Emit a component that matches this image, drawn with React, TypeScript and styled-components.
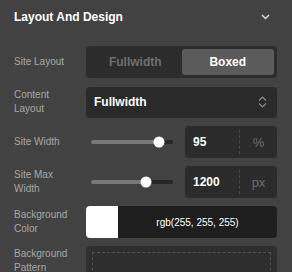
import styled, { createGlobalStyle } from "styled-components";

// 전역 스타일
const GlobalStyle = createGlobalStyle`
  body {
    margin: 0;
    background-color: #424242;
    font-family: "Liberation Sans", Arial, sans-serif;
  }
`;

const Panel = styled.div`
  width: 292px;
  height: 272px;
  overflow: hidden;
  background-color: #424242;
`;

const Header = styled.div`
  display: flex;
  align-items: center;
  justify-content: space-between;
  height: 34px;
  padding: 0 22px 0 14px;
`;

const Title = styled.h2`
  margin: 0;
  font-size: 12px;
  font-weight: bold;
  color: #ffffff;
`;

const Rows = styled.div`
  display: flex;
  flex-direction: column;
  gap: 8px;
  padding: 12px 15px 0 14px;
`;

const Row = styled.div<{ $top?: boolean }>`
  display: flex;
  align-items: ${(p) => (p.$top ? "flex-start" : "center")};
  min-height: 32px;
`;

const Label = styled.div<{ $top?: boolean }>`
  flex: 0 0 72px;
  box-sizing: border-box;
  padding-right: 12px;
  padding-top: ${(p) => (p.$top ? "1px" : "0")};
  font-size: 10px;
  line-height: 14px;
  color: #a6a6a6;
`;

const Control = styled.div`
  flex: 1;
  display: flex;
  align-items: center;
  min-width: 0;
`;

// 세그먼트 버튼
const Segmented = styled.div`
  flex: 1;
  display: flex;
  height: 32px;
  box-sizing: border-box;
  padding: 3px;
  border-radius: 4px;
  background-color: #2c2c2c;
`;

const SegButton = styled.div<{ $active?: boolean }>`
  flex: 1;
  display: flex;
  align-items: center;
  justify-content: center;
  border-radius: 3px;
  font-size: 12px;
  font-weight: bold;
  color: ${(p) => (p.$active ? "#ffffff" : "#6e6e6e")};
  background-color: ${(p) => (p.$active ? "#5b5b5b" : "transparent")};
`;

// 선택 박스
const Select = styled.div`
  flex: 1;
  display: flex;
  align-items: center;
  justify-content: space-between;
  height: 31px;
  padding: 0 10px 0 8px;
  border-radius: 4px;
  background-color: #2a2a2a;
  font-size: 12px;
  font-weight: bold;
  color: #ffffff;
`;

// 슬라이더
const SliderWrap = styled.div`
  flex: 1;
  padding: 0 12px 0 5px;
`;

const Track = styled.div`
  position: relative;
  height: 4px;
  border-radius: 2px;
  background-color: #262626;
`;

const Fill = styled.div`
  height: 100%;
  border-radius: 2px;
  background-color: #787878;
`;

const Thumb = styled.div`
  position: absolute;
  top: 50%;
  width: 11px;
  height: 11px;
  border-radius: 50%;
  background-color: #ffffff;
  transform: translate(-50%, -50%);
`;

const NumberBox = styled.div`
  flex: 0 0 92px;
  display: flex;
  height: 32px;
  border-radius: 4px;
  background-color: #2b2b2b;
`;

const NumberValue = styled.div`
  flex: 1;
  display: flex;
  align-items: center;
  padding-left: 8px;
  font-size: 12px;
  font-weight: bold;
  color: #ffffff;
`;

const Unit = styled.div`
  flex: 0 0 37px;
  display: flex;
  align-items: center;
  justify-content: center;
  margin: 4px 0;
  border-left: 1px dashed #4a4a4a;
  font-size: 13px;
  color: #6e6e6e;
`;

// 색상 선택
const ColorBox = styled.div`
  flex: 1;
  display: flex;
  height: 32px;
  border-radius: 4px;
  overflow: hidden;
  background-color: #1e1e1e;
`;

const Swatch = styled.div<{ $color: string }>`
  flex: 0 0 32px;
  background-color: ${(p) => p.$color};
`;

const ColorText = styled.div`
  flex: 1;
  display: flex;
  align-items: center;
  justify-content: center;
  font-size: 10px;
  color: #ffffff;
`;

// 패턴 박스
const PatternBox = styled.div`
  flex: 1;
  height: 80px;
  box-sizing: border-box;
  padding: 6px;
  border-radius: 4px;
  background-color: #2e2e2e;
`;

const PatternInner = styled.div`
  height: 100%;
  border: 1px dashed #505050;
`;

function Slider({ value }: { value: number }) {
  return (
    <SliderWrap>
      <Track>
        <Fill style={{ width: `${value}%` }} />
        <Thumb style={{ left: `${value}%` }} />
      </Track>
    </SliderWrap>
  );
}

function App() {
  return (
    <Panel>
      <GlobalStyle />
      <Header>
        <Title>Layout And Design</Title>
        <svg width="9" height="6" viewBox="0 0 9 6">
          <path d="M1 1l3.5 3.5L8 1" fill="none" stroke="#e0e0e0" strokeWidth="1.4" />
        </svg>
      </Header>
      <Rows>
        <Row>
          <Label>Site Layout</Label>
          <Control>
            <Segmented>
              <SegButton>Fullwidth</SegButton>
              <SegButton $active>Boxed</SegButton>
            </Segmented>
          </Control>
        </Row>
        <Row>
          <Label>Content Layout</Label>
          <Control>
            <Select>
              Fullwidth
              <svg width="9" height="12" viewBox="0 0 9 12">
                <path
                  d="M1 4.5L4.5 1L8 4.5M1 7.5L4.5 11L8 7.5"
                  fill="none"
                  stroke="#8a8a8a"
                  strokeWidth="1.2"
                />
              </svg>
            </Select>
          </Control>
        </Row>
        <Row>
          <Label>Site Width</Label>
          <Control>
            <Slider value={83} />
            <NumberBox>
              <NumberValue>95</NumberValue>
              <Unit>%</Unit>
            </NumberBox>
          </Control>
        </Row>
        <Row>
          <Label>Site Max Width</Label>
          <Control>
            <Slider value={67} />
            <NumberBox>
              <NumberValue>1200</NumberValue>
              <Unit>px</Unit>
            </NumberBox>
          </Control>
        </Row>
        <Row>
          <Label>Background Color</Label>
          <Control>
            <ColorBox>
              <Swatch $color="#ffffff" />
              <ColorText>rgb(255, 255, 255)</ColorText>
            </ColorBox>
          </Control>
        </Row>
        <Row $top>
          <Label $top>Background Pattern</Label>
          <Control>
            <PatternBox>
              <PatternInner />
            </PatternBox>
          </Control>
        </Row>
      </Rows>
    </Panel>
  );
}

export default App;
